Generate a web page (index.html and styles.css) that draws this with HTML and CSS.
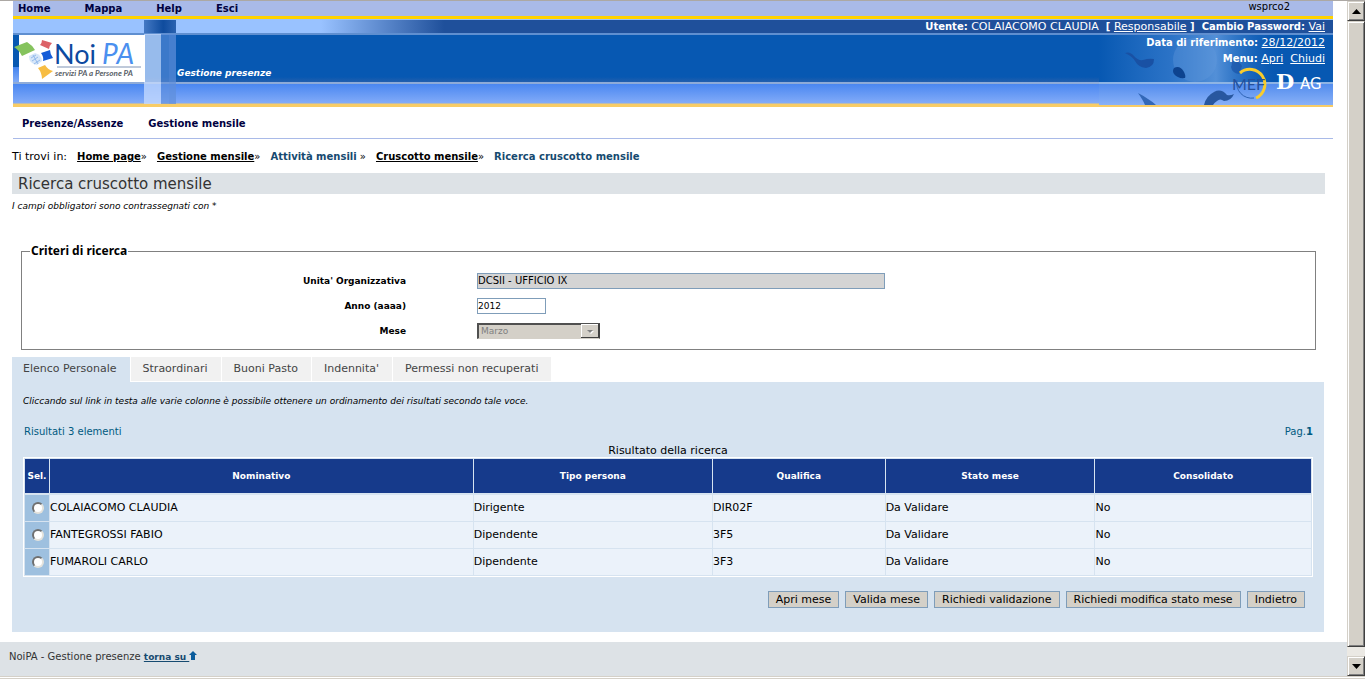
FILE: index.html
```html
<!DOCTYPE html>
<html lang="it">
<head>
<meta charset="utf-8">
<title>NoiPA - Gestione presenze</title>
<link rel="stylesheet" href="styles.css">
</head>
<body>
<div class="window">
  <div class="page" id="top">
    <header class="header">
      <nav class="topbar">
        <a href="#">Home</a><a href="#">Mappa</a><a href="#">Help</a><a href="#">Esci</a>
        <span class="server">wsprco2</span>
      </nav>
      <div class="banner">
        <svg class="art-left" width="440" height="88" viewBox="0 0 440 88" aria-hidden="true">
          <defs>
            <linearGradient id="fade"><stop offset="0" stop-color="#99c2ff"/><stop offset=".7" stop-color="#99c2ff"/><stop offset=".98" stop-color="#1f509b"/></linearGradient>
            <linearGradient id="low" x2="0" y2="1"><stop offset="0" stop-color="#4384ef"/><stop offset="1" stop-color="#7faaf7"/></linearGradient>
            <linearGradient id="col"><stop offset="0" stop-color="#4479c4"/><stop offset=".6" stop-color="#0f4c9e"/><stop offset="1" stop-color="#2b62b0"/></linearGradient>
          </defs>
          <rect width="440" height="13" y="1" fill="url(#fade)"/>
          <rect x="0" y="48" width="8" height="15" fill="url(#low)"/>
          <rect x="131" y="1" width="32" height="13" fill="url(#col)"/>
          <rect x="131" y="15" width="17" height="70" fill="#c8dcff" opacity=".75"/>
          <rect x="148" y="15" width="15" height="70" fill="#5f90da" opacity=".6"/>
          <rect x="156" y="15" width="7" height="70" fill="#5f90da" opacity=".3"/>
        </svg>
        <svg class="art-right" width="234" height="88" viewBox="0 0 234 88" aria-hidden="true">
          <defs>
            <linearGradient id="glow"><stop offset="0" stop-color="#4a8ad8" stop-opacity="0"/><stop offset=".3" stop-color="#4284d4" stop-opacity=".6"/><stop offset=".5" stop-color="#6ca2e4" stop-opacity=".75"/><stop offset=".75" stop-color="#2f74c8" stop-opacity="0"/></linearGradient>
            <linearGradient id="low2" x2="0" y2="1"><stop offset="0" stop-color="#528ced"/><stop offset="1" stop-color="#89b1f8"/></linearGradient>
          </defs>
          <rect y="16" width="234" height="47" fill="#0758b2"/>
          <rect y="16" width="234" height="47" fill="url(#glow)"/>
          <rect y="65" width="234" height="21" fill="url(#low2)"/>
          <circle cx="96" cy="41" r="22" fill="#659bdd" opacity=".35"/>
          <path d="M26 34q5-2 9 3 4 5 9 4 6-2 11-1 0 8-8 9-8-1-11-7-3-5-10-8Z" fill="#1951a4"/>
          <path d="M75 49q6-3 10 4 2 4 1 6-7 1-11-4-2-3 0-6Z" fill="#0d438f"/>
          <path d="M132 48q2-5 0-9 8 3 11 8l-3 8q-7-1-8-7Z" fill="#1954a6" opacity=".7"/>
          <path d="M39 74q6 3 10 6 5 3 8 6H46q-2-5-7-12Z" fill="#3368b8"/>
          <path d="M105 86q2-9 10-13 7-4 13 3 3 1 7-1-3 7-10 7-4-3-7 0-3 2-4 4Z" fill="#28579f"/>
          <path d="M0 64H234" stroke="#8eb4e4" stroke-width="2"/>
          <path d="M141 54a15 15 0 1 1 16 25" fill="none" stroke="#f9cc2c" stroke-width="3"/>
          <path d="M138 61a15 15 0 0 0 17 18" fill="none" stroke="#2e63b4" stroke-width="1"/>
          <text class="mef" x="133" y="71">MEF</text>
          <text class="dag-d" x="177" y="70">D</text>
          <text class="dag-s" x="201" y="70">AG</text>
        </svg>
        <svg class="logo" width="126" height="47" viewBox="0 0 126 47" role="img" aria-label="NoiPA servizi PA a Persone PA">
          <rect width="126" height="47" fill="#fff"/>
          <path d="m-5 12 13-5q5 3 8 8l-13 6q-3-6-8-9Z" fill="#85c35d"/>
          <path d="m23 5 10 3q-3 3-3 6l-9-4q2-2 2-5Z" fill="#dc6267"/>
          <path d="m22 18 9-3q0 4 3 8l-10 3q1-4-2-8Z" fill="#145cd8"/>
          <path d="m19 33 7-3q3 5 8 6l-11 8q0-6-4-11Z" fill="#f7bd43"/>
          <path d="m10 21 6-3q7 2 7 8l-5 4q-8-1-8-9Z" fill="#d6e6f8"/>
          <path d="m12 23 5-3m-4 6 6-4m-4 7 6-4m-7-5 5 9" stroke="#94baec" fill="none"/>
          <path d="M38 32h84" stroke="#7f93b5"/>
          <text class="logo-noi" x="35" y="29">Noi</text>
          <text class="logo-pa" x="83" y="29">PA</text>
          <text class="logo-sub" x="36" y="41">servizi PA a Persone PA</text>
        </svg>
        <div class="app-name">Gestione presenze</div>
        <div class="user">
          <div><b>Utente:</b> COLAIACOMO CLAUDIA &nbsp;<b>[</b> <a href="#">Responsabile</a> <b>]</b> &nbsp;<b>Cambio Password:</b> <a href="#">Vai</a></div>
          <div><b>Data di riferimento:</b> <a href="#">28/12/2012</a></div>
          <div><b>Menu:</b> <a href="#">Apri</a> &nbsp;<a href="#">Chiudi</a></div>
        </div>
      </div>
      <nav class="sections"><a href="#">Presenze/Assenze</a><a href="#">Gestione mensile</a></nav>
    </header>

    <main class="main">
      <nav class="crumbs">
        <span class="lead">Ti trovi in:</span>
        <span><a href="#">Home page</a>»</span>
        <span><a href="#">Gestione mensile</a>»</span>
        <span><b>Attività mensili</b> »</span>
        <span><a href="#">Cruscotto mensile</a>»</span>
        <span><b>Ricerca cruscotto mensile</b></span>
      </nav>
      <h1 class="title">Ricerca cruscotto mensile</h1>
      <p class="note">I campi obbligatori sono contrassegnati con *</p>

      <form>
        <fieldset class="criteria">
          <legend>Criteri di ricerca</legend>
          <div class="row"><label for="unit">Unita' Organizzativa</label><input id="unit" class="unit" type="text" value="DCSII - UFFICIO IX" readonly></div>
          <div class="row"><label for="year">Anno (aaaa)</label><input id="year" class="year" type="text" value="2012"></div>
          <div class="row"><label for="month">Mese</label>
            <div class="combo">
              <select id="month" disabled><option>Marzo</option></select>
              <svg class="combo-arrow" width="18" height="14" viewBox="0 0 18 14" aria-hidden="true"><path d="M0 0h18v14H0Z" fill="#404040"/><path d="M0 0h17v13H0Z" fill="#fff"/><path d="M1 1h16v12H1Z" fill="#d4d0c8"/><path d="M7 7h6l-3 3Z" fill="#fff"/><path d="M6 6h6L9 9Z" fill="#808080"/></svg>
            </div>
          </div>
        </fieldset>

        <div class="tabs">
          <a class="tab active" href="#">Elenco Personale</a><a class="tab" href="#">Straordinari</a><a class="tab" href="#">Buoni Pasto</a><a class="tab" href="#">Indennita'</a><a class="tab" href="#">Permessi non recuperati</a>
        </div>
        <section class="panel">
          <p class="note">Cliccando sul link in testa alle varie colonne è possibile ottenere un ordinamento dei risultati secondo tale voce.</p>
          <div class="summary"><span>Risultati 3 elementi</span><span>Pag.<b>1</b></span></div>
          <table class="results">
            <caption>Risultato della ricerca</caption>
            <colgroup><col class="c-sel"><col class="c-name"><col class="c-type"><col class="c-qual"><col class="c-state"><col></colgroup>
            <thead><tr><th>Sel.</th><th>Nominativo</th><th>Tipo persona</th><th>Qualifica</th><th>Stato mese</th><th>Consolidato</th></tr></thead>
            <tbody>
              <tr><td class="sel"><input type="radio" name="sel" aria-label="COLAIACOMO CLAUDIA"></td><td>COLAIACOMO CLAUDIA</td><td>Dirigente</td><td>DIR02F</td><td>Da Validare</td><td>No</td></tr>
              <tr><td class="sel"><input type="radio" name="sel" aria-label="FANTEGROSSI FABIO"></td><td>FANTEGROSSI FABIO</td><td>Dipendente</td><td>3F5</td><td>Da Validare</td><td>No</td></tr>
              <tr><td class="sel"><input type="radio" name="sel" aria-label="FUMAROLI CARLO"></td><td>FUMAROLI CARLO</td><td>Dipendente</td><td>3F3</td><td>Da Validare</td><td>No</td></tr>
            </tbody>
          </table>
          <div class="actions">
            <button type="button">Apri mese</button><button type="button">Valida mese</button><button type="button">Richiedi validazione</button><button type="button">Richiedi modifica stato mese</button><button type="button">Indietro</button>
          </div>
        </section>
      </form>
    </main>
    <footer class="footer">NoiPA - Gestione presenze <a href="#top">torna su <svg width="8" height="9" viewBox="0 0 8 9" aria-hidden="true"><path d="M4 0 8 4H6V9H2V4H0Z" fill="#0a5c9c"/></svg></a></footer>
  </div>
  <div class="scrollbar" aria-hidden="true">
    <div class="sb-btn"><svg width="9" height="5" viewBox="0 0 9 5"><path d="M0 5 4.500 0 9 5Z"/></svg></div>
    <div class="sb-thumb"></div>
    <div class="sb-track"></div>
    <div class="sb-btn"><svg width="9" height="5" viewBox="0 0 9 5"><path d="M0 0 4.500 5 9 0Z"/></svg></div>
  </div>
</div>
</body>
</html>
```
FILE: styles.css
```css
* { box-sizing: border-box; }
body {
  margin: 0;
  background: #fff;
  color: #000;
  font: 10px/16px "DejaVu Sans", Verdana, sans-serif;
}
.window {
  display: flex;
  min-height: 100vh;
  border-top: 1px solid #aca8a4;
  border-bottom: 3px double #d4d0c8;
}
.page { flex: 1; min-width: 0; display: flex; flex-direction: column; }

/* Header */
.header { margin: 0 14px 0 13px; }
.topbar {
  display: flex;
  gap: 34px;
  height: 18px;
  padding: 0 43px 0 5px;
  background: #a9bae8;
  border-bottom: 3px solid #ffd200;
  line-height: 15px;
}
.topbar a, .sections a { color: #000040; font-weight: bold; text-decoration: none; }
.server { margin-left: auto; line-height: 12px; }
.banner {
  position: relative;
  display: flex;
  height: 88px;
  background: linear-gradient(#99c2ff 0 1px, #1f509b 1px 14px, #5f8fd0 14px 16px, #0758b2 16px 58px, #225fae 63px, #8eabd8 63px 65px, #4a87f1 65px, #82abf8 84px, #f8cc66 85px);
}
.art-left { position: absolute; left: 0; top: 0; }
.art-right { position: absolute; right: 0; top: 0; }
.logo { position: relative; margin: 16px 32px 0 6px; overflow: visible; }
.logo-noi, .logo-pa { font: 27px Lato, sans-serif; fill: #0d4aa0; }
.logo-pa { font-size: 28px; font-style: italic; fill: #4b90ef; }
.logo-sub { font: italic bold 8px Lato, sans-serif; fill: #5a5f68; }
.mef { font: 16px Lato, sans-serif; fill: #24509c; }
.dag-d, .dag-s { font: bold 21px "DejaVu Serif", serif; fill: #fff; }
.dag-s { font: 15px "DejaVu Sans", sans-serif; }
.app-name {
  position: relative;
  margin-top: 46px;
  color: #fff;
  font-size: 9px;
  font-weight: bold;
  font-style: italic;
}
.user {
  position: relative;
  margin-left: auto;
  padding-right: 8px;
  color: #fff;
  font-size: 11px;
  text-align: right;
}
.user a { color: #fff; }
.user b { font-size: 10px; }
.sections {
  display: flex;
  gap: 25px;
  padding: 9px 9px 6px;
  border-bottom: 1px solid #a9bae8;
}

/* Content */
.main { margin: 0 22px 0 12px; }
.crumbs { display: flex; flex-wrap: wrap; gap: 10px; padding: 10px 0 8px; }
.crumbs a { color: #000; font-weight: bold; }
.crumbs b { color: #164a70; }
.crumbs .lead { font-size: 11px; }
.title {
  margin: 0;
  padding: 1px 6px 0;
  background: #dde2e6;
  color: #333;
  font-size: 15px;
  font-weight: normal;
  line-height: 20px;
}
.note { margin: 0; padding-top: 4px; font-size: 9px; font-style: italic; }
.criteria {
  margin: 29px 9px 7px;
  padding: 9px 0 6px;
  border: 1px solid #808080;
}
.criteria legend { margin-left: 8px; padding: 0 1px; font: bold 12px/16px "Noto Sans", sans-serif; }
.row { display: flex; align-items: center; height: 25px; }
.row label { width: 384px; margin-right: 71px; text-align: right; font-size: 9px; font-weight: bold; }
.row input {
  height: 16px;
  padding: 0;
  border: 1px solid #7f9db9;
  font: 10px/14px "DejaVu Sans", sans-serif;
}
.row .unit { width: 408px; background: #d4d4d4; }
.row .year { width: 69px; font-size: 9px; }
.combo { position: relative; width: 123px; height: 16px; }
.combo select {
  appearance: none;
  display: block;
  width: 100%;
  height: 16px;
  padding: 0 2px;
  border: solid;
  border-width: 2px 1px 1px 2px;
  border-color: #505050 #404040 #d4d0c8 #505050;
  border-radius: 0;
  background: #d4d0c8;
  color: #808080;
  opacity: 1;
  font: 9px/13px "DejaVu Sans", sans-serif;
}
.combo-arrow { position: absolute; right: 1px; top: 1px; }
.tabs { display: flex; gap: 1px; }
.tab {
  height: 24px;
  margin-bottom: 1px;
  padding: 0 13px 0 12px;
  background: #f1f1f1;
  color: #444;
  font-size: 11px;
  line-height: 24px;
  text-decoration: none;
}
.tab.active { height: 25px; margin-bottom: 0; padding-left: 11px; background: #d6e3f0; }
.panel { margin-right: 1px; padding: 7px 11px 24px; background: #d6e3f0; }
.summary { display: flex; justify-content: space-between; padding: 15px 0 5px 1px; color: #005a80; }
.results {
  width: 100%;
  table-layout: fixed;
  border: 1px solid #fff;
  border-spacing: 1px;
  font-size: 11px;
}
.results caption { line-height: 12px; }
.results th {
  height: 35px;
  padding: 0;
  border-bottom: 1px solid #d6e3f0;
  background: #163a8b;
  color: #fff;
  font-size: 9px;
}
.results td { height: 26px; padding: 0; background: #ebf2fa; }
.results .sel { background: #9ec0df; padding: 0 0 0 2px; }
.c-sel { width: 24px; }
.c-name { width: 33%; }
.c-type { width: 18.6%; }
.c-qual { width: 13.4%; }
.c-state { width: 16.3%; }
.sel input {
  appearance: none;
  display: block;
  width: 12px;
  height: 12px;
  margin: 0 auto;
  border: 2px solid;
  border-color: #707070 #e4e2dc #e4e2dc #707070;
  border-radius: 50%;
  background: #fff;
}
.actions { display: flex; justify-content: flex-end; gap: 6px; padding: 14px 8px 0 0; }
.actions button {
  height: 17px;
  padding: 0 7px;
  border: 1px solid #7f9db9;
  background: #d4d0c8;
  color: #000;
  font: 11px/15px "DejaVu Sans", sans-serif;
}

.footer { flex: 1; margin-top: 10px; padding: 7px 9px; background: #dde2e6; color: #333; }
.footer a { color: #164a70; font-size: 9px; font-weight: bold; }

/* Scrollbar */
.scrollbar { display: flex; flex-direction: column; width: 18px; }
.sb-btn, .sb-thumb {
  border: 1px solid;
  border-color: #d4d0c8 #404040 #404040 #d4d0c8;
  background: #d4d0c8;
  box-shadow: inset 1px 1px #fff, inset -1px -1px #808080;
}
.sb-btn { display: flex; align-items: center; justify-content: center; height: 20px; }
.sb-thumb { flex: 1; }
.sb-track { height: 9px; background: #ebe9e4; }
```
